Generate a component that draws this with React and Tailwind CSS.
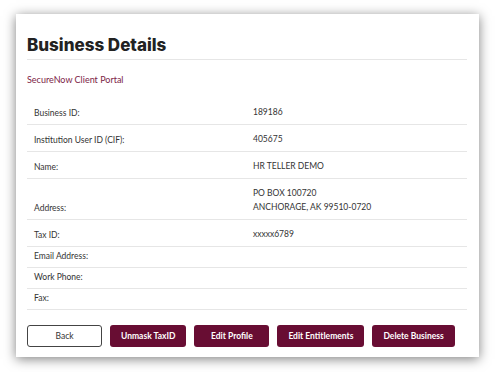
const rows = [
  { label: 'Business ID:', value: ['189186'] },
  { label: 'Institution User ID (CIF):', value: ['405675'] },
  { label: 'Name:', value: ['HR TELLER DEMO'] },
  { label: 'Address:', value: ['PO BOX 100720', 'ANCHORAGE, AK 99510-0720'] },
  { label: 'Tax ID:', value: ['xxxxx6789'] },
  { label: 'Email Address:', value: [] },
  { label: 'Work Phone:', value: [] },
  { label: 'Fax:', value: [] },
];

const actions = ['Unmask TaxID', 'Edit Profile', 'Edit Entitlements', 'Delete Business'];

export default function App() {
  return (
    <div className="w-[496px] h-[372px] bg-white pt-[14px] pl-[16px] font-['Lato',sans-serif] text-[#333]">
      <div className="w-[463px] h-[343px] bg-white shadow-[0_2px_11px_rgba(0,0,0,0.5)] pl-[11px] pr-[12px] pt-[19px]">
        <h1 className="font-['Inter',sans-serif] font-extrabold text-[17px] leading-[24px] text-[#222] pb-[2px] border-b border-[#e6e6e6]">
          Business Details
        </h1>
        <p className="mt-[13px] text-[9px] leading-[14px] text-[#7d2446]">SecureNow Client Portal</p>

        <div className="mt-[11px] text-[8.5px]">
          {rows.map((row) => (
            <div key={row.label} className="flex border-b border-[#e6e6e6]">
              <div className="w-[226px] self-end pl-[7px] pt-[3px] pb-[4px] leading-[13px]">{row.label}</div>
              <div className="flex-1 pt-[7px] pb-[5px] leading-[14px]">
                {row.value.map((line) => (
                  <div key={line}>{line}</div>
                ))}
              </div>
            </div>
          ))}
        </div>

        <div className="mt-[15px] flex gap-[8px] text-[8.5px] font-bold whitespace-nowrap">
          <button className="h-[22px] min-w-[75px] px-[11px] rounded-[3px] border border-[#444] bg-white text-[#333] font-normal">
            Back
          </button>
          {actions.map((a) => (
            <button key={a} className="h-[22px] min-w-[75px] px-[11px] rounded-[3px] bg-[#680d33] text-white">
              {a}
            </button>
          ))}
        </div>
      </div>
    </div>
  );
}
